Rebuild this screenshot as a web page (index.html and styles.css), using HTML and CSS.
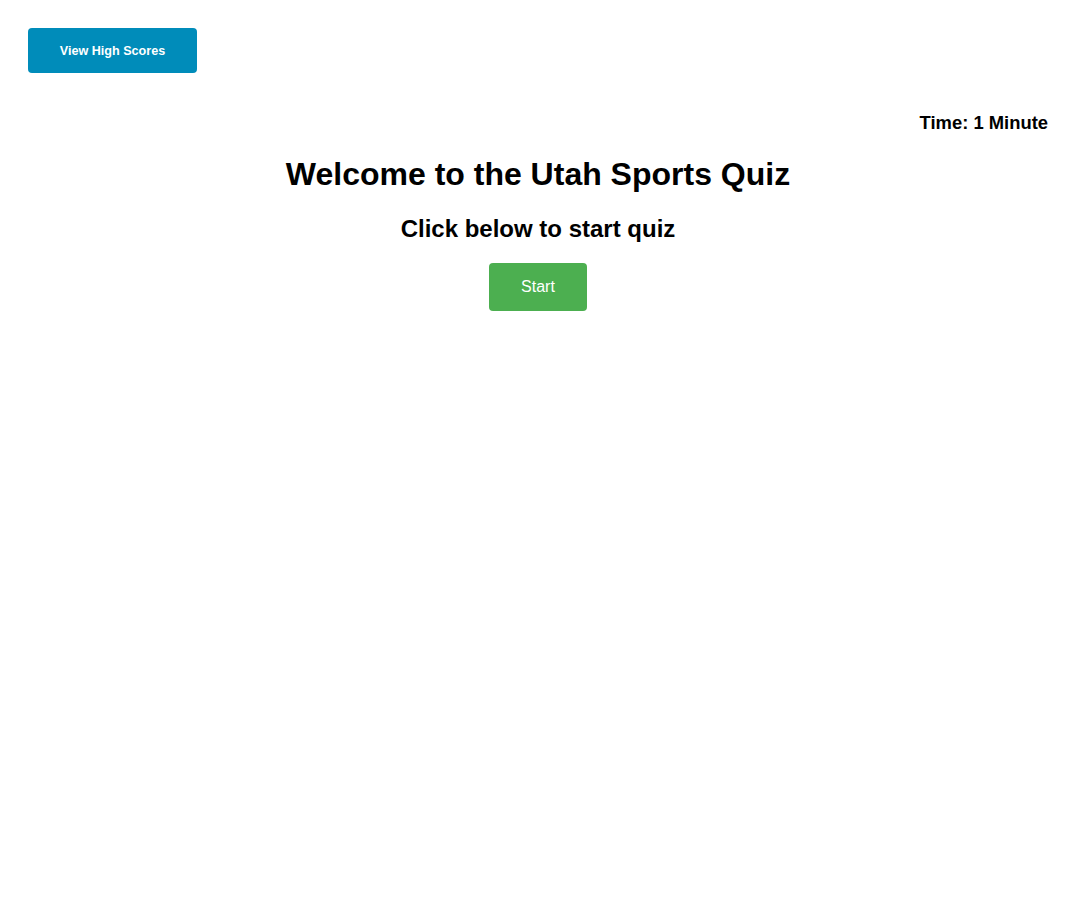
FILE: index.html
```html
<!DOCTYPE html>
<html>
<head>
<meta charset="utf-8">
<link rel="stylesheet" href="styles.css">
</head>
<body>
<div class="page">
  <header class="top">
    <button class="btn btn-scores">View High Scores</button>
  </header>
  <div class="timer">Time: 1 Minute</div>
  <main class="intro">
    <h1 class="title">Welcome to the Utah Sports Quiz</h1>
    <h2 class="subtitle">Click below to start quiz</h2>
    <button class="btn btn-start">Start</button>
  </main>
</div>
</body>
</html>
```

FILE: styles.css
```css
html, body {
  margin: 0;
  padding: 0;
  background: #fff;
}
body {
  font-family: "Liberation Sans", Arial, sans-serif;
  color: #000;
}
.page {
  padding: 28px 28px;
}
.top {
  display: flex;
}
.btn {
  border: none;
  border-radius: 4px;
  color: #fff;
  font-family: "Liberation Sans", Arial, sans-serif;
  cursor: pointer;
}
.btn-scores {
  background: #008cba;
  font-size: 12.6px;
  font-weight: bold;
  width: 169px;
  height: 45px;
  padding: 0;
}
.timer {
  text-align: right;
  font-size: 18.4px;
  font-weight: bold;
  margin-top: 39px;
  line-height: 21px;
}
.intro {
  display: flex;
  flex-direction: column;
  align-items: center;
}
.title {
  font-size: 32px;
  margin: 23px 0 0;
  line-height: 37px;
}
.subtitle {
  font-size: 24px;
  margin: 22px 0 0;
  line-height: 28px;
}
.btn-start {
  background: #4caf50;
  font-size: 16px;
  width: 98px;
  height: 48px;
  padding: 0;
  margin-top: 20px;
}
```
